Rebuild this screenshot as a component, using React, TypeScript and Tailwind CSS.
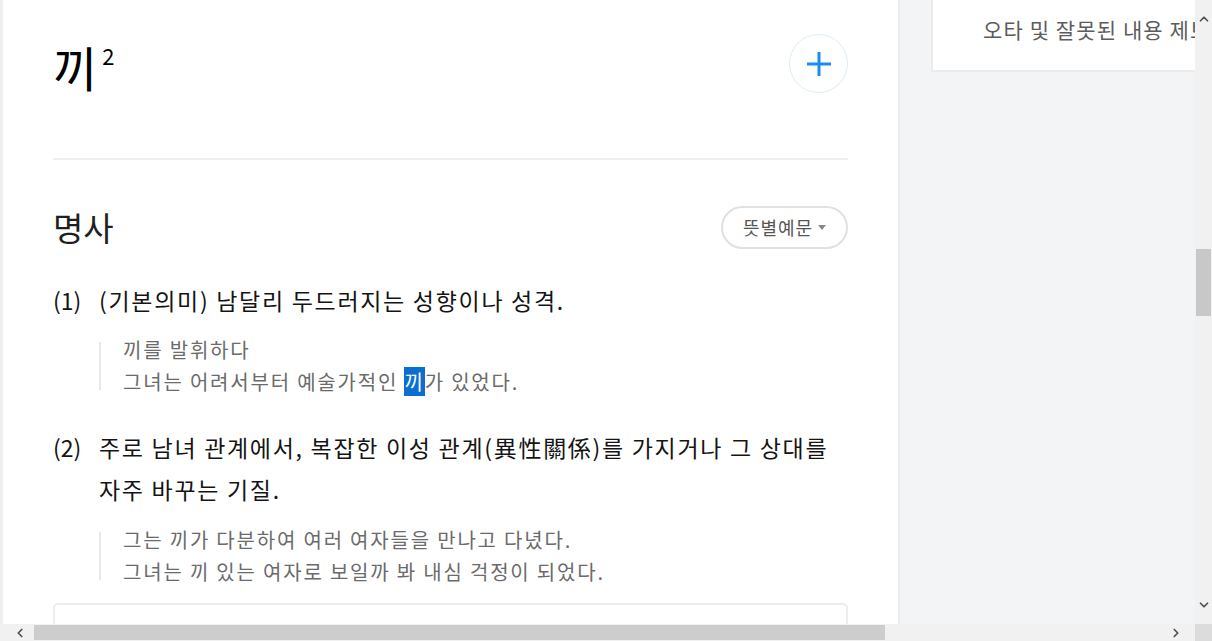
import { ChevronDown, ChevronLeft, ChevronRight, ChevronUp } from "lucide-react";

const font = { fontFamily: '"Noto Sans CJK KR", "Noto Sans", sans-serif' };

function Examples({ children }: { children: React.ReactNode }) {
  return (
    <div className="relative ml-[46px] pl-[24px] text-[20px] tracking-[1.8px] leading-[32px] text-[#6b6b6b] before:absolute before:left-0 before:top-[8px] before:bottom-[8px] before:w-[2px] before:bg-[#e8e8e8]">
      {children}
    </div>
  );
}

export default function App() {
  return (
    <div
      className="w-[1212px] h-[641px] overflow-hidden flex flex-col bg-white"
      style={font}
    >
      <div className="flex flex-1 min-h-0">
        {/* page */}
        <div className="flex flex-1 min-w-0 overflow-hidden">
          <div className="w-[3px] bg-[#efefef]" />

          {/* main column */}
          <div className="w-[895px] shrink-0 bg-white px-[50px]">
            <div className="h-[158px] flex justify-between items-start">
              <h1 className="mt-[42px] flex items-start text-[48px] leading-none text-black font-normal">
                끼<sup className="text-[22px] top-0 ml-[5px] mt-[2px] leading-none">2</sup>
              </h1>
              <button className="mt-[34px] w-[59px] h-[59px] rounded-full border border-[#dcebfa] flex items-center justify-center">
                <svg width="26" height="26" viewBox="0 0 26 26">
                  <path d="M13 1v24M1 13h24" stroke="#1a8cf0" strokeWidth="3" />
                </svg>
              </button>
            </div>
            <div className="h-[2px] bg-[#f0f0f0]" />

            <div className="mt-[46px] flex items-center justify-between">
              <h2 className="text-[33px] leading-none text-[#1f1f1f] font-normal">명사</h2>
              <button className="h-[43px] w-[127px] rounded-full border-2 border-[#e1e1e1] flex items-center justify-center gap-[5px] text-[18px] tracking-[1px] text-[#555]">
                뜻별예문
                <svg width="8" height="5" viewBox="0 0 8 5">
                  <path d="M0 0h8L4 5z" fill="#888" />
                </svg>
              </button>
            </div>

            <div className="mt-[30px] flex text-[23px] tracking-[1.7px] leading-[42px] text-[#141414]">
              <span className="w-[46px] shrink-0 tracking-normal">(1)</span>
              <p>(기본의미) 남달리 두드러지는 성향이나 성격.</p>
            </div>
            <div className="mt-[13px]">
              <Examples>
                <div>끼를 발휘하다</div>
                <div>
                  그녀는 어려서부터 예술가적인{" "}
                  <span className="bg-[#0a6fd1] text-white">끼</span>가 있었다.
                </div>
              </Examples>
            </div>

            <div className="mt-[28px] flex text-[23px] tracking-[1.7px] leading-[42px] text-[#141414]">
              <span className="w-[46px] shrink-0 tracking-normal">(2)</span>
              <p>
                주로 남녀 관계에서, 복잡한 이성 관계(異性關係)를 가지거나 그 상대를
                <br />
                자주 바꾸는 기질.
              </p>
            </div>
            <div className="mt-[14px]">
              <Examples>
                <div>그는 끼가 다분하여 여러 여자들을 만나고 다녔다.</div>
                <div>그녀는 끼 있는 여자로 보일까 봐 내심 걱정이 되었다.</div>
              </Examples>
            </div>

            <div className="mt-[15px] h-[60px] rounded-[5px] border-2 border-[#ededed]" />
          </div>

          {/* side column */}
          <div className="flex-1 min-w-0 border-l-2 border-[#ebebeb] bg-[#f3f4f6] pl-[31px] overflow-hidden">
            <div className="w-[340px] h-[72px] bg-white border-l-2 border-b-2 border-[#ebebeb] pl-[50px] pt-[14px] text-[21px] tracking-[1.1px] text-[#5c5c5c] whitespace-nowrap">
              오타 및 잘못된 내용 제보
            </div>
          </div>
        </div>

        {/* vertical scrollbar */}
        <div className="w-[17px] shrink-0 bg-[#f1f1f1] flex flex-col items-center">
          <ChevronUp className="mt-[12px] w-[14px] h-[14px] text-[#505050]" strokeWidth={3} />
          <div className="mt-[223px] w-[15px] h-[67px] bg-[#c8c8c8]" />
          <ChevronDown className="mt-auto mb-[12px] w-[14px] h-[14px] text-[#505050]" strokeWidth={3} />
        </div>
      </div>

      {/* horizontal scrollbar */}
      <div className="h-[17px] shrink-0 flex bg-[#f1f1f1]">
        <div className="flex-1 flex items-center">
          <ChevronLeft className="ml-[13px] w-[14px] h-[14px] text-[#505050]" strokeWidth={3} />
          <div className="ml-[7px] w-[851px] h-[15px] bg-[#cdcdcd]" />
          <ChevronRight className="ml-auto mr-[12px] w-[14px] h-[14px] text-[#505050]" strokeWidth={3} />
        </div>
        <div className="w-[17px] bg-[#dcdcdc]" />
      </div>
    </div>
  );
}
